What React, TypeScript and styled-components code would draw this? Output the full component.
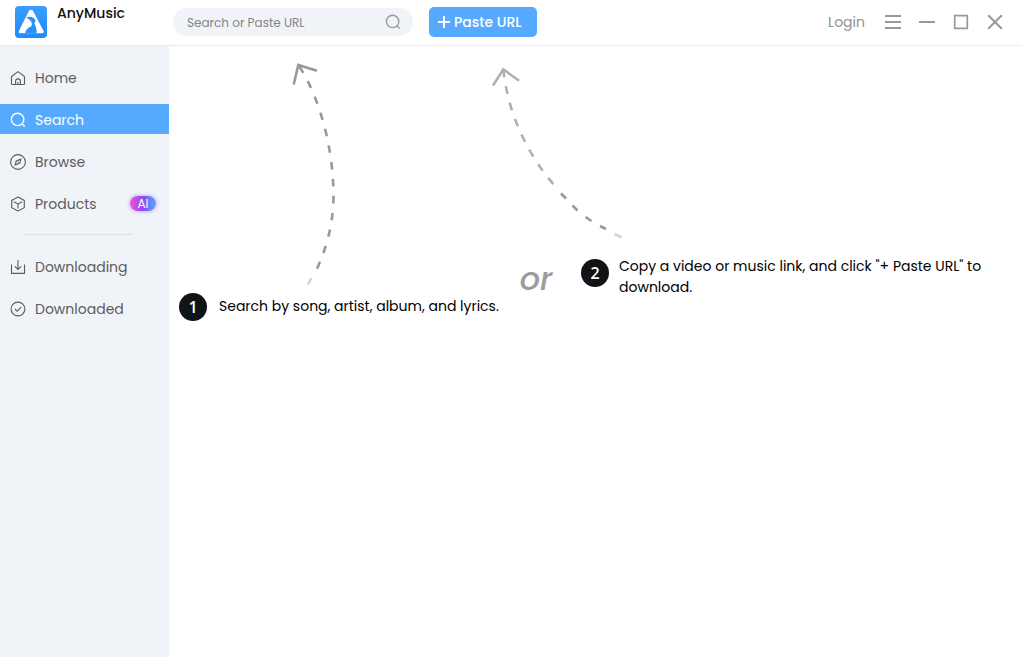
import React from "react";
import styled, { createGlobalStyle } from "styled-components";

const GlobalStyle = createGlobalStyle`
  * { box-sizing: border-box; }
  body {
    margin: 0;
    background: #fff;
    color: #111;
    font-family: Poppins, Inter, "Liberation Sans", sans-serif;
    font-size: 14px;
  }
  button, input { font: inherit; }
`;

const Window = styled.div`
  display: flex;
  flex-direction: column;
  min-height: 100vh;
`;

const Header = styled.header`
  display: flex;
  height: 46px;
  border-bottom: 1px solid #ececec;
`;

const Brand = styled.div`
  display: flex;
  flex: 0 0 173px;
  gap: 10px;
  padding: 6px 0 0 15px;
`;

const BrandName = styled.span`
  font-size: 14px;
  line-height: 14px;
  font-weight: 500;
`;

const Tools = styled.div`
  display: flex;
  flex: 1;
  align-items: center;
  gap: 16px;
  padding: 0 19px 2px 0;
`;

const SearchForm = styled.form`
  display: flex;
  align-items: center;
  width: 240px;
  height: 28px;
  padding: 0 12px 0 14px;
  border-radius: 14px;
  background: #f0f4f9;
`;

const SearchInput = styled.input`
  flex: 1;
  min-width: 0;
  padding: 2px 0 0;
  border: 0;
  outline: 0;
  background: transparent;
  font-size: 12px;
  color: #333;
  &::placeholder { color: #858585; opacity: 1; }
`;

const IconButton = styled.button`
  display: flex;
  padding: 0;
  border: 0;
  background: none;
  color: #999;
  cursor: pointer;
`;

const PasteButton = styled.button`
  display: flex;
  align-items: center;
  gap: 4px;
  width: 108px;
  height: 30px;
  padding: 0 9px;
  border: 0;
  border-radius: 5px;
  background: #55aaff;
  color: #fff;
  font-size: 14px;
  font-weight: 500;
  white-space: nowrap;
  cursor: pointer;
`;

const PasteLabel = styled.span`
  padding-top: 2px;
`;

const WindowControls = styled.div`
  display: flex;
  align-items: center;
  gap: 18px;
  margin-left: auto;
`;

const LoginLink = styled.a`
  margin-right: 2px;
  padding-top: 2px;
  color: #929292;
  font-size: 14px;
  text-decoration: none;
`;

const Body = styled.div`
  display: flex;
  flex: 1;
`;

const Sidebar = styled.nav`
  display: flex;
  flex: 0 0 169px;
  flex-direction: column;
  gap: 12px;
  padding-top: 16px;
  background: #f0f4f9;
`;

const NavLink = styled.a<{ $active?: boolean }>`
  display: flex;
  align-items: center;
  gap: 9px;
  height: 30px;
  padding: 2px 13px 0 10px;
  background: ${(p) => (p.$active ? "#55aaff" : "transparent")};
  color: ${(p) => (p.$active ? "#fff" : "#5c5c5c")};
  text-decoration: none;
  font-size: 14px;
`;

const AiBadge = styled.span`
  margin: 0 0 2px auto;
  width: 26px;
  height: 15px;
  border-radius: 8px;
  background: linear-gradient(90deg, #f055d8, #8a4af0 50%, #55aaff);
  box-shadow: 0 0 4px #b48cff;
  color: #fff;
  font-size: 12px;
  line-height: 16px;
  text-align: center;
`;

const Divider = styled.hr`
  width: 108px;
  height: 1px;
  margin: 4px 0 4px 25px;
  border: 0;
  background: #e0e0e0;
`;

const Guide = styled.main`
  display: flex;
  flex: 1;
  align-items: flex-start;
  padding: 14px 10px;
`;

const FirstHint = styled.section`
  flex: 0 0 326px;
`;

const SecondHint = styled.section`
  flex: 1;
`;

const CurveUp = styled.svg`
  display: block;
  margin: 0 0 3px 106px;
`;

const CurveLeft = styled.svg`
  display: block;
  margin: 0 0 11px -96px;
`;

const Step = styled.div<{ $gap: number }>`
  display: flex;
  gap: ${(p) => p.$gap}px;
`;

const StepNumber = styled.span`
  flex: 0 0 28px;
  height: 28px;
  border-radius: 50%;
  background: #111416;
  color: #fff;
  font-family: "Open Sans", sans-serif;
  font-size: 16px;
  font-weight: 600;
  line-height: 28px;
  text-align: center;
`;

const StepText = styled.p<{ $lines?: number }>`
  margin: ${(p) => (p.$lines === 2 ? "-3px 0 0" : "3px 0 0")};
  color: #000;
  font-size: 14px;
  line-height: 21px;
`;

const Or = styled.span`
  flex: 0 0 62px;
  margin: 199px 14px 0 0;
  color: #9c9c9c;
  font-size: 32px;
  font-style: italic;
  font-weight: 500;
  line-height: 40px;
  text-align: center;
`;

const glyph = {
  width: 16,
  height: 16,
  viewBox: "0 0 16 16",
  fill: "none",
  stroke: "currentColor",
  strokeWidth: 1.1,
  "aria-hidden": true,
} as const;

const HomeIcon = () => (
  <svg {...glyph}>
    <path d="M2.2 14.5Q1.5 14.5 1.5 13.8V6.6L8 1.6l6.5 5V13.8Q14.5 14.5 13.8 14.5zM5.6 14.5v-3.2a2.4 2.4 0 0 1 4.8 0v3.2M8 12v2.5" />
  </svg>
);

const SearchIcon = () => (
  <svg {...glyph} strokeWidth={1.4}>
    <circle cx="7.6" cy="7.4" r="6.2" />
    <path d="M12 12l2.8 2.6" />
  </svg>
);

const BrowseIcon = () => (
  <svg {...glyph}>
    <circle cx="8" cy="8" r="7.4" />
    <path d="M10.8 5.2L9.9 9 5.2 10.8 6.2 7z" />
    <path d="M8 7.6v.8" />
  </svg>
);

const ProductsIcon = () => (
  <svg {...glyph}>
    <path d="M8 1.1l6.3 3.3v7.3L8 15l-6.3-3.3V4.4zM3.8 5.8L8 8l4.2-2.2M8 8v4.6" />
  </svg>
);

const DownloadIcon = () => (
  <svg {...glyph}>
    <path d="M1.5 5.6v8.8h13V5.6M8 1v9.2M4.8 7.4L8 10.4l3.2-3" />
  </svg>
);

const DoneIcon = () => (
  <svg {...glyph}>
    <circle cx="8" cy="8" r="6.9" />
    <path d="M4.9 8l2.3 2.2 4-4" />
  </svg>
);

const Logo = () => (
  <svg width="32" height="32" viewBox="0 0 96 96" role="img" aria-label="AnyMusic logo">
    <defs>
      <linearGradient id="logo-fill" x1="0" y1="0" x2="0" y2="1">
        <stop offset="0" stopColor="#3c9cff" />
        <stop offset="1" stopColor="#1f8bfb" />
      </linearGradient>
    </defs>
    <rect width="96" height="96" rx="12" fill="url(#logo-fill)" />
    <path fill="#fff" d="M42 14Q48 9 54 14L86 76Q87 82 82 82H14Q9 81 12 74Z" />
    <path
      fill="#2a92fd"
      d="M33 36C44 29 57 33 62 44L58 52C63 60 65 70 65 82H30C32 72 38 65 49 61C54 52 48 40 33 36Z"
    />
  </svg>
);

const App = () => (
  <>
    <GlobalStyle />
    <Window>
      <Header>
        <Brand>
          <Logo />
          <BrandName>AnyMusic</BrandName>
        </Brand>
        <Tools>
          <SearchForm role="search" onSubmit={(e) => e.preventDefault()}>
            <SearchInput aria-label="Search or Paste URL" placeholder="Search or Paste URL" />
            <IconButton type="submit" aria-label="Search">
              <SearchIcon />
            </IconButton>
          </SearchForm>
          <PasteButton type="button">
            <svg width="12" height="12" viewBox="0 0 12 12" stroke="currentColor" strokeWidth="2" aria-hidden>
              <path d="M6 0v12M0 6h12" />
            </svg>
            <PasteLabel>Paste URL</PasteLabel>
          </PasteButton>
          <WindowControls>
            <LoginLink href="#login">Login</LoginLink>
            <IconButton type="button" aria-label="Menu">
              <svg {...glyph} strokeWidth={2}>
                <path d="M0 2h16M0 8h16M0 14h16" />
              </svg>
            </IconButton>
            <IconButton type="button" aria-label="Minimize">
              <svg {...glyph} strokeWidth={2}>
                <path d="M0 8h16" />
              </svg>
            </IconButton>
            <IconButton type="button" aria-label="Maximize">
              <svg {...glyph} strokeWidth={1.7}>
                <path d="M1.7 1.7h12.6v12.6H1.7z" />
              </svg>
            </IconButton>
            <IconButton type="button" aria-label="Close">
              <svg {...glyph} strokeWidth={2}>
                <path d="M1.2 1.2l13.6 13.6M14.8 1.2L1.2 14.8" />
              </svg>
            </IconButton>
          </WindowControls>
        </Tools>
      </Header>
      <Body>
        <Sidebar>
          <NavLink href="#home"><HomeIcon />Home</NavLink>
          <NavLink href="#search" $active aria-current="page"><SearchIcon />Search</NavLink>
          <NavLink href="#browse"><BrowseIcon />Browse</NavLink>
          <NavLink href="#products"><ProductsIcon />Products<AiBadge>AI</AiBadge></NavLink>
          <Divider />
          <NavLink href="#downloading"><DownloadIcon />Downloading</NavLink>
          <NavLink href="#downloaded"><DoneIcon />Downloaded</NavLink>
        </Sidebar>
        <Guide>
          <FirstHint>
            <CurveUp width="60" height="230" viewBox="285 60 60 230" fill="none" stroke="#999" strokeWidth="2.6" aria-hidden>
              <path d="M293.7 84.5L298.3 65L317 70.8" />
              <path d="M298.3 65C318 94 333.5 145 333.5 196C333.5 226 325 252 315.5 272" strokeDasharray="7.5 9.4" strokeDashoffset="-2" />
              <path d="M311.5 278L308 284.5" stroke="#d4d4d4" />
            </CurveUp>
            <Step $gap={12}>
              <StepNumber>1</StepNumber>
              <StepText>Search by song, artist, album, and lyrics.</StepText>
            </Step>
          </FirstHint>
          <Or>or</Or>
          <SecondHint>
            <CurveLeft width="145" height="188" viewBox="485 60 145 188" fill="none" stroke="#b0b0b0" strokeWidth="2.6" aria-hidden>
              <path d="M493 85.5L503.3 69.3L519 80.8" />
              <path d="M503.3 69.3C508 116 530 158 555 186" strokeDasharray="8 9" />
              <path d="M561 193.5L566 198.5M572.5 205.5L577.5 210.5M585.5 217L591.5 221M600 226L606 229" stroke="#999" />
              <path d="M614.5 234L621.5 237.2" stroke="#d4d4d4" />
            </CurveLeft>
            <Step $gap={10}>
              <StepNumber>2</StepNumber>
              <StepText $lines={2}>
                Copy a video or music link, and click "+ Paste URL" to download.
              </StepText>
            </Step>
          </SecondHint>
        </Guide>
      </Body>
    </Window>
  </>
);

export default App;
